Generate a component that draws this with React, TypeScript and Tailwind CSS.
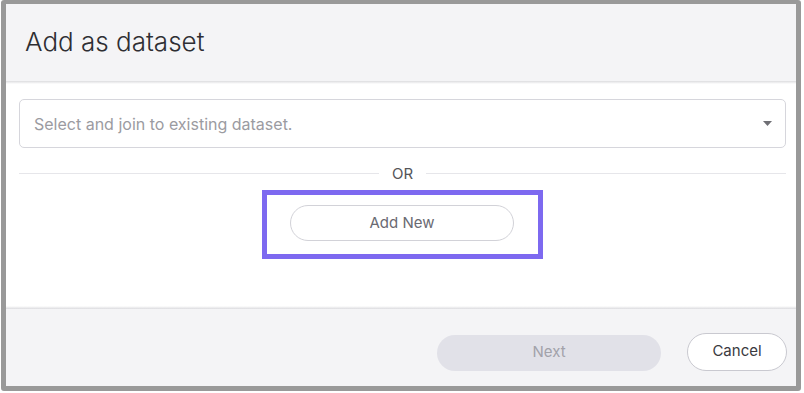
import React from 'react'

const font = { fontFamily: 'Inter, "Open Sans", sans-serif' }

export default function App() {
  return (
    <div className="w-[804px] h-[393px] bg-white" style={font}>
      <div className="ml-px w-[800px] h-[391px] border-[5px] border-t-4 border-[#999999] rounded-[3px] flex flex-col bg-white overflow-hidden">
        {/* Header */}
        <div className="h-[77px] bg-[#f4f4f6] flex items-center pl-[19px] shrink-0">
          <h1 className="text-[26px] font-light text-[#2e2e33] -mt-[3px]">Add as dataset</h1>
        </div>
        <div className="h-[3px] bg-gradient-to-b from-[#dcdcdf] to-white shrink-0" />

        {/* Body */}
        <div className="flex-1 px-[13px] pt-[15px] pr-[10px]">
          <div className="h-[49px] border border-[#d6d6dc] rounded-[5px] flex items-center justify-between pl-[14px] pr-[13px]">
            <span className="text-[16px] text-[#9b9ba1]">Select and join to existing dataset.</span>
            <svg width="9" height="5" viewBox="0 0 9 5">
              <path d="M0 0 L9 0 L4.5 5 Z" fill="#6f6f75" />
            </svg>
          </div>

          <div className="flex items-center gap-[13px] mt-[18px]">
            <div className="flex-1 h-px bg-[#e6e6ea]" />
            <span className="text-[15px] text-[#555559] leading-none">OR</span>
            <div className="flex-1 h-px bg-[#e6e6ea]" />
          </div>

          <div className="flex justify-center mt-[9px] pr-px">
            <div className="w-[281px] h-[69px] border-[5px] border-[#7d69f0] flex justify-center pt-[10px]">
              <button className="w-[224px] h-[36px] rounded-full border border-[#d2d2d8] bg-white text-[15px] text-[#6a6a72]">
                Add New
              </button>
            </div>
          </div>
        </div>

        {/* Footer */}
        <div className="h-[3px] bg-gradient-to-b from-white to-[#dcdcdf] shrink-0" />
        <div className="h-[77px] bg-[#f4f4f6] flex items-center justify-end gap-[26px] pr-[9px] shrink-0">
          <button className="w-[224px] h-[36px] rounded-full bg-[#e1e1e8] text-[15px] text-[#a2a2aa] mt-[10px]">Next</button>
          <button className="w-[100px] h-[38px] rounded-full border border-[#c9c9d0] bg-white text-[15px] text-[#3a3a40] mt-[8px]">
            Cancel
          </button>
        </div>
      </div>
    </div>
  )
}
